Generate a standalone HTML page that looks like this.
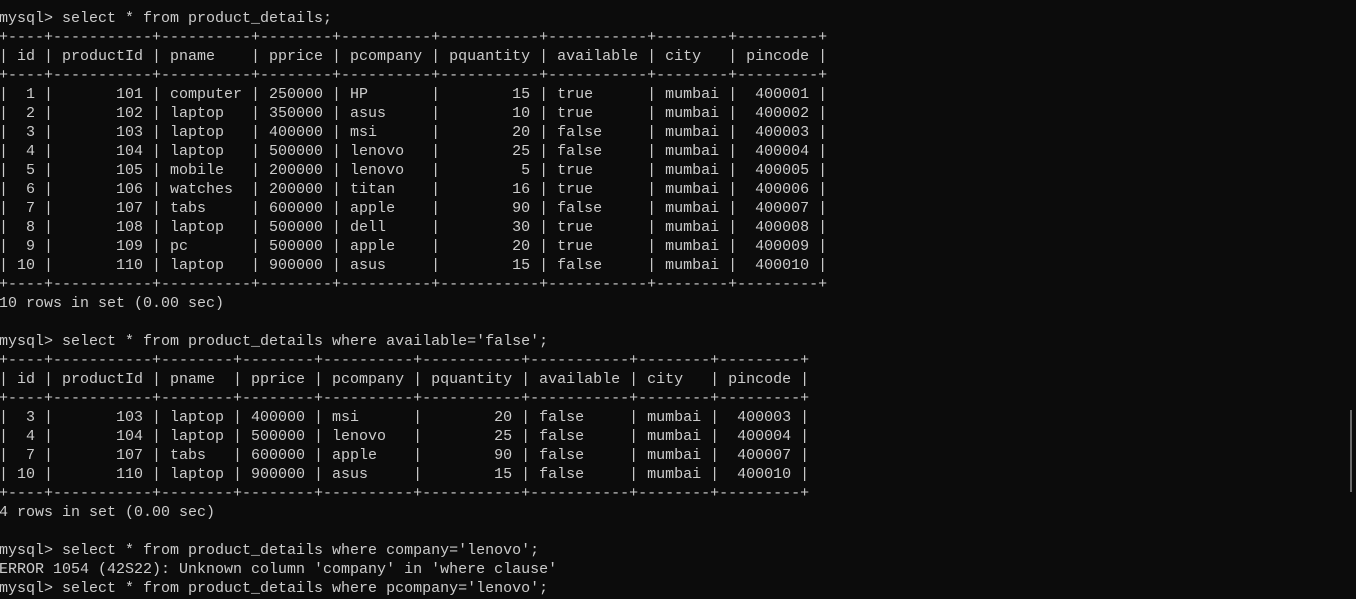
<!DOCTYPE html>
<html><head><meta charset="utf-8"><style>
html,body{margin:0;padding:0;background:#0c0c0c;width:1356px;height:599px;overflow:hidden}
pre{margin:0;position:absolute;left:-1px;top:9px;font-family:"Liberation Mono",monospace;font-size:15px;line-height:19px;color:#cccccc;letter-spacing:0}
.sb{position:absolute;left:1350px;top:410px;width:2px;height:82px;background:#6a6a6a}
</style></head><body>
<pre>mysql&gt; select * from product_details;
+----+-----------+----------+--------+----------+-----------+-----------+--------+---------+
| id | productId | pname    | pprice | pcompany | pquantity | available | city   | pincode |
+----+-----------+----------+--------+----------+-----------+-----------+--------+---------+
|  1 |       101 | computer | 250000 | HP       |        15 | true      | mumbai |  400001 |
|  2 |       102 | laptop   | 350000 | asus     |        10 | true      | mumbai |  400002 |
|  3 |       103 | laptop   | 400000 | msi      |        20 | false     | mumbai |  400003 |
|  4 |       104 | laptop   | 500000 | lenovo   |        25 | false     | mumbai |  400004 |
|  5 |       105 | mobile   | 200000 | lenovo   |         5 | true      | mumbai |  400005 |
|  6 |       106 | watches  | 200000 | titan    |        16 | true      | mumbai |  400006 |
|  7 |       107 | tabs     | 600000 | apple    |        90 | false     | mumbai |  400007 |
|  8 |       108 | laptop   | 500000 | dell     |        30 | true      | mumbai |  400008 |
|  9 |       109 | pc       | 500000 | apple    |        20 | true      | mumbai |  400009 |
| 10 |       110 | laptop   | 900000 | asus     |        15 | false     | mumbai |  400010 |
+----+-----------+----------+--------+----------+-----------+-----------+--------+---------+
10 rows in set (0.00 sec)

mysql&gt; select * from product_details where available='false';
+----+-----------+--------+--------+----------+-----------+-----------+--------+---------+
| id | productId | pname  | pprice | pcompany | pquantity | available | city   | pincode |
+----+-----------+--------+--------+----------+-----------+-----------+--------+---------+
|  3 |       103 | laptop | 400000 | msi      |        20 | false     | mumbai |  400003 |
|  4 |       104 | laptop | 500000 | lenovo   |        25 | false     | mumbai |  400004 |
|  7 |       107 | tabs   | 600000 | apple    |        90 | false     | mumbai |  400007 |
| 10 |       110 | laptop | 900000 | asus     |        15 | false     | mumbai |  400010 |
+----+-----------+--------+--------+----------+-----------+-----------+--------+---------+
4 rows in set (0.00 sec)

mysql&gt; select * from product_details where company='lenovo';
ERROR 1054 (42S22): Unknown column 'company' in 'where clause'
mysql&gt; select * from product_details where pcompany='lenovo';</pre>
<div class="sb"></div>
</body></html>
